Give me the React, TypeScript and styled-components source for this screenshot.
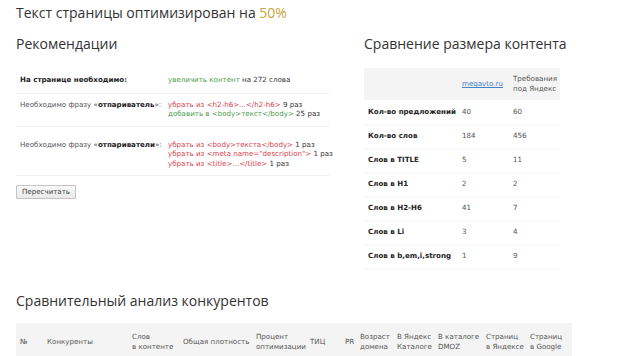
import React from "react";
import styled, { createGlobalStyle } from "styled-components";

const GlobalStyle = createGlobalStyle`
  html, body {
    margin: 0;
    padding: 0;
    background: #ffffff;
  }
  body {
    font-family: "DejaVu Sans", Verdana, sans-serif;
    font-size: 7.1px;
    color: #333;
  }
`;

const Page = styled.div`
  width: 644px;
  height: 356px;
  overflow: hidden;
  padding: 0 16px;
  box-sizing: border-box;
`;

const PageTitle = styled.h1`
  margin: 0;
  padding-top: 3px;
  font-family: "Open Sans", sans-serif;
  font-size: 14px;
  font-weight: 400;
  line-height: 20px;
  color: #333;
`;

const Percent = styled.span`
  color: #c9a43c;
`;

const Columns = styled.div`
  display: flex;
  align-items: flex-start;
`;

const LeftColumn = styled.section`
  width: 348px;
  flex: none;
`;

const RightColumn = styled.section`
  width: 240px;
  flex: none;
`;

const SectionTitle = styled.h2<{ $top: number }>`
  margin: ${({ $top }) => $top}px 0 0;
  font-family: "Open Sans", sans-serif;
  font-size: 14px;
  font-weight: 400;
  line-height: 20px;
  color: #333;
  white-space: nowrap;
`;

const RecTable = styled.table`
  margin-top: 14px;
  width: 314px;
  border-collapse: collapse;
  table-layout: fixed;
`;

const RecRow = styled.tr`
  border-bottom: 1px solid #f0f0f0;
`;

const RecCell = styled.td<{ $pt: number; $pb: number; $w?: number }>`
  padding: ${({ $pt, $pb }) => `${$pt}px 0 ${$pb}px 4px`};
  width: ${({ $w }) => ($w ? `${$w}px` : "auto")};
  vertical-align: top;
  line-height: 9.5px;
  color: #555;
  white-space: nowrap;
`;

const Strong = styled.b`
  color: #222;
  font-weight: 700;
`;

const Add = styled.span`
  color: #4d9a4a;
`;

const Remove = styled.span`
  color: #d8414d;
`;

const Count = styled.span`
  color: #333;
`;

const Line = styled.div``;

const Button = styled.button`
  display: block;
  margin-top: 9px;
  height: 14px;
  width: 60px;
  padding: 0;
  font-family: "DejaVu Sans", Verdana, sans-serif;
  font-size: 7.1px;
  line-height: 12px;
  color: #444;
  background: linear-gradient(#fafafa, #e9e9e9);
  border: 1px solid #c4c4c4;
  border-radius: 1px;
`;

const SizeTable = styled.table`
  margin-top: 14px;
  width: 196px;
  border-collapse: collapse;
  table-layout: fixed;
`;

const SizeHead = styled.tr`
  background: #f4f4f4;
  height: 32px;
`;

const SizeRow = styled.tr`
  height: 24px;
  border-bottom: 1px solid #f5f5f5;
`;

const SizeCell = styled.td<{ $w?: number; $label?: boolean }>`
  width: ${({ $w }) => ($w ? `${$w}px` : "auto")};
  padding: 0 0 0 4px;
  line-height: 10px;
  vertical-align: middle;
  color: ${({ $label }) => ($label ? "#222" : "#555")};
  font-weight: ${({ $label }) => ($label ? 700 : 400)};
  white-space: nowrap;
`;

const SiteLink = styled.a`
  color: #4a80c4;
  text-decoration: underline;
`;

const CompTable = styled.table`
  margin-top: 12px;
  width: 556px;
  border-collapse: collapse;
  table-layout: fixed;
`;

const CompHead = styled.tr`
  background: #f4f4f4;
`;

const CompCell = styled.th<{ $w: number }>`
  width: ${({ $w }) => $w}px;
  padding: 9px 0 9px 4px;
  text-align: left;
  vertical-align: middle;
  font-weight: 400;
  line-height: 10px;
  color: #555;
  white-space: nowrap;
  box-sizing: border-box;
`;

const sizeRows: [string, string, string][] = [
  ["Кол-во предложений", "40", "60"],
  ["Кол-во слов", "184", "456"],
  ["Слов в TITLE", "5", "11"],
  ["Слов в H1", "2", "2"],
  ["Слов в H2-H6", "41", "7"],
  ["Слов в Li", "3", "4"],
  ["Слов в b,em,i,strong", "1", "9"],
];

const compCols: [number, React.ReactNode][] = [
  [27, "№"],
  [85, "Конкуренты"],
  [51, <>Слов<br />в контенте</>],
  [73, "Общая плотность"],
  [54, <>Процент<br />оптимизации</>],
  [35, "ТИЦ"],
  [15, "PR"],
  [37, <>Возраст<br />домена</>],
  [41, <>В Яндекс<br />Каталоге</>],
  [48, <>В каталоге<br />DMOZ</>],
  [44, <>Страниц<br />в Яндексе</>],
  [46, <>Страниц<br />в Google</>],
];

export default function App() {
  return (
    <>
      <GlobalStyle />
      <Page>
        <PageTitle>
          Текст страницы оптимизирован на <Percent>50%</Percent>
        </PageTitle>
        <Columns>
          <LeftColumn>
            <SectionTitle $top={11}>Рекомендации</SectionTitle>
            <RecTable>
              <tbody>
                <RecRow>
                  <RecCell $pt={7} $pb={8} $w={144}>
                    <Strong>На странице необходимо:</Strong>
                  </RecCell>
                  <RecCell $pt={7} $pb={8}>
                    <Add>увеличить контент</Add> <Count>на 272 слова</Count>
                  </RecCell>
                </RecRow>
                <RecRow>
                  <RecCell $pt={6} $pb={7}>
                    Необходимо фразу «<Strong>отпариватель</Strong>»:
                  </RecCell>
                  <RecCell $pt={6} $pb={7}>
                    <Line>
                      <Remove>убрать из &lt;h2-h6&gt;...&lt;/h2-h6&gt;</Remove>{" "}
                      <Count>9 раз</Count>
                    </Line>
                    <Line>
                      <Add>добавить в &lt;body&gt;текст&lt;/body&gt;</Add>{" "}
                      <Count>25 раз</Count>
                    </Line>
                  </RecCell>
                </RecRow>
                <RecRow>
                  <RecCell $pt={13} $pb={7}>
                    Необходимо фразу «<Strong>отпариватели</Strong>»:
                  </RecCell>
                  <RecCell $pt={13} $pb={7}>
                    <Line>
                      <Remove>убрать из &lt;body&gt;текста&lt;/body&gt;</Remove>{" "}
                      <Count>1 раз</Count>
                    </Line>
                    <Line>
                      <Remove>убрать из &lt;meta name="description"&gt;</Remove>{" "}
                      <Count>1 раз</Count>
                    </Line>
                    <Line>
                      <Remove>убрать из &lt;title&gt;...&lt;/title&gt;</Remove>{" "}
                      <Count>1 раз</Count>
                    </Line>
                  </RecCell>
                </RecRow>
              </tbody>
            </RecTable>
            <Button type="button">Пересчитать</Button>
          </LeftColumn>
          <RightColumn>
            <SectionTitle $top={11}>Сравнение размера контента</SectionTitle>
            <SizeTable>
              <tbody>
                <SizeHead>
                  <SizeCell $w={90} />
                  <SizeCell $w={47}>
                    <SiteLink href="#">megavto.ru</SiteLink>
                  </SizeCell>
                  <SizeCell $w={47}>
                    Требования
                    <br />
                    под Яндекс
                  </SizeCell>
                </SizeHead>
                {sizeRows.map(([label, site, req]) => (
                  <SizeRow key={label}>
                    <SizeCell $label>{label}</SizeCell>
                    <SizeCell>{site}</SizeCell>
                    <SizeCell>{req}</SizeCell>
                  </SizeRow>
                ))}
              </tbody>
            </SizeTable>
          </RightColumn>
        </Columns>
        <SectionTitle $top={22}>Сравнительный анализ конкурентов</SectionTitle>
        <CompTable>
          <thead>
            <CompHead>
              {compCols.map(([w, label], i) => (
                <CompCell key={i} $w={w}>
                  {label}
                </CompCell>
              ))}
            </CompHead>
          </thead>
        </CompTable>
      </Page>
    </>
  );
}
